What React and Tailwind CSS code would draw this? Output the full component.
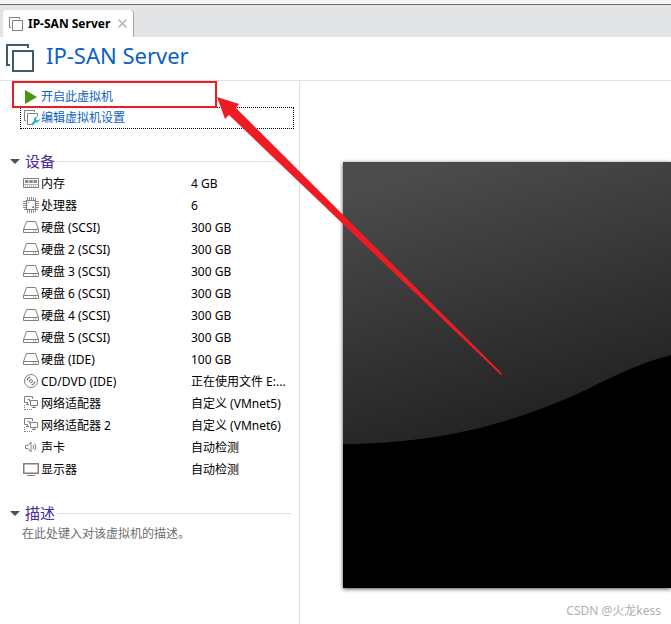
import React from "react";

const FONT =
  "font-['Noto_Sans','Noto_Sans_CJK_SC',sans-serif]";

function MachineIcon({ className }) {
  return (
    <svg className={className} viewBox="0 0 14 14" fill="none" stroke="currentColor" aria-hidden="true">
      <path d="M2 10.500H.5V.5h10V2" />
      <path d="M3.500 3.500h10v10h-10z" />
    </svg>
  );
}

function LargeMachineIcon() {
  return (
    <svg className="size-7 shrink-0 text-[#455a68]" viewBox="0 0 28 28" fill="none" stroke="currentColor" strokeWidth="2" aria-hidden="true">
      <path d="M4 21H1V1h21v3" />
      <path d="M7 7h20v20H7z" />
    </svg>
  );
}

function EditIcon() {
  return (
    <svg className="size-4 shrink-0" viewBox="0 0 16 16" fill="none" aria-hidden="true">
      <path d="M2 10.500H.5V.5h10V2M7 14.500H3.500v-11h10V6" stroke="#808080" />
      <path d="M7.500 15l4.500-4.500" stroke="#18b3cf" strokeWidth="2.200" />
      <path d="M13.800 6.800L12 8.700l.4 1.400 1.400.4L15.600 8.700a3.200 3.200 0 0 1-4.600 3.300L10 11a3.200 3.200 0 0 1 3.800-4.200z" fill="#18b3cf" />
    </svg>
  );
}

function DeviceIcon({ type }) {
  return (
    <svg className="mb-0.5 size-4 shrink-0" viewBox="0 0 16 16" fill="none" stroke="#808080" aria-hidden="true">
      {type === "memory" && (
        <>
          <path d="M.5 3.500h15v9H.5z" />
          <path d="M2 5h3.500v3H2zM6.250 5h3.500v3h-3.500zM10.500 5H14v3h-3.500z" fill="#8c8c8c" stroke="none" />
          <path d="M1 9.500h14" stroke="#b5b5b5" />
          <path d="M2 11h12" strokeDasharray="1 1" />
        </>
      )}
      {type === "cpu" && (
        <>
          <path d="M3.500 3.500h9v9h-9z" strokeWidth="1.200" />
          <path d="M4.500 0v3M6.500 0v3M8.500 0v3M10.500 0v3M12.500 1v2M4.500 13v3M6.500 13v3M8.500 13v3M10.500 13v3M12.500 13v2M0 4.500h3M0 6.500h3M0 8.500h3M0 10.500h3M1 12.500h2M13 4.500h3M13 6.500h3M13 8.500h3M13 10.500h3M13 12.500h2" strokeWidth=".9" />
          <path d="M5 5.500h1M9 10.500h2M10.500 9v1" />
        </>
      )}
      {type === "disk" && (
        <>
          <path d="M.5 10.500l3-8h9l3 8v3H.5z" />
          <path d="M.5 10.500h15M10 12h1M12 12h1" />
        </>
      )}
      {type === "cd" && (
        <>
          <circle cx="8" cy="8" r="6.500" />
          <circle cx="8" cy="8" r="1.500" />
          <path d="M4.200 7.500A3.800 3.800 0 0 1 7.500 4.200M11.800 8.500a3.800 3.800 0 0 1-3.300 3.300" strokeWidth="1.300" />
        </>
      )}
      {type === "network" && (
        <>
          <path d="M5 7.500H1.500v-6h8V4M3 9.500h3M4.500 8v1" />
          <path d="M7.500 5.500h7v5h-7zM11 11v2M9 12.500h4" />
          <path d="M4.500 4.500h2v2" />
          <path d="M1.500 10v5M2 14.500h8" strokeDasharray="1 1" />
        </>
      )}
      {type === "sound" && (
        <>
          <path d="M2.500 6.500H5l3-3.500v10L5 9.500H2.500z" />
          <path d="M10 6q1 2 0 4M11.800 4.500q2 3.500 0 7" />
        </>
      )}
      {type === "display" && (
        <>
          <path d="M.75 2.750h14.500v9.500H.75z" strokeWidth="1.500" />
          <path d="M4 14.500h8" />
        </>
      )}
    </svg>
  );
}

const devices = [
  ["memory", "内存", "4 GB"],
  ["cpu", "处理器", "6"],
  ["disk", "硬盘 (SCSI)", "300 GB"],
  ["disk", "硬盘 2 (SCSI)", "300 GB"],
  ["disk", "硬盘 3 (SCSI)", "300 GB"],
  ["disk", "硬盘 6 (SCSI)", "300 GB"],
  ["disk", "硬盘 4 (SCSI)", "300 GB"],
  ["disk", "硬盘 5 (SCSI)", "300 GB"],
  ["disk", "硬盘 (IDE)", "100 GB"],
  ["cd", "CD/DVD (IDE)", "正在使用文件 E:..."],
  ["network", "网络适配器", "自定义 (VMnet5)"],
  ["network", "网络适配器 2", "自定义 (VMnet6)"],
  ["sound", "声卡", "自动检测"],
  ["display", "显示器", "自动检测"],
];

function SectionHeading({ children }) {
  return (
    <h2 className="flex h-5 items-center pr-2 pl-[10px] text-[15px] leading-5 text-[#4a2a9e]">
      <button type="button" className="flex items-center gap-[5px]">
        <svg className="h-[5px] w-[10px]" viewBox="0 0 10 5" aria-hidden="true">
          <path d="M0 0h10L5 5z" fill="#3f5663" />
        </svg>
        {children}
      </button>
      <span className="ml-0.5 h-px flex-1 bg-[#e0e0e0]" />
    </h2>
  );
}

function ScreenPreview() {
  return (
    <div className="h-[426px] overflow-hidden bg-black shadow-[0_1px_4px_rgba(0,0,0,0.7)]">
      <svg className="h-full w-[568px] max-w-none" viewBox="0 0 568 426" aria-hidden="true">
        <defs>
          <linearGradient id="glass" gradientUnits="userSpaceOnUse" x1="50" y1="20" x2="125" y2="270">
            <stop offset="0" stopColor="#4b4b4b" />
            <stop offset="1" stopColor="#242424" />
          </linearGradient>
        </defs>
        <path d="M0 0h568v170C450 170 370 178 328 193C290 203 264 218 232 233C150 269 80 281 0 282z" fill="url(#glass)" />
      </svg>
    </div>
  );
}

export default function App() {
  return (
    <div className={`relative flex min-h-screen flex-col overflow-hidden bg-white text-[12px] text-black ${FONT}`}>
      <div className="h-1 bg-[#f4f4f4]" />
      <nav className="flex h-[33px] items-end border-t border-[#6b6b6b] bg-[#e3e4e6] pl-[3px]">
        <div className="flex h-[27px] w-[131px] items-center rounded-t-sm border-r border-[#a8a8a8] bg-white pl-1.5">
          <MachineIcon className="size-[14px] shrink-0 text-[#808080]" />
          <span className="ml-[5px] flex-1 text-[12px] font-bold whitespace-nowrap">IP-SAN Server</span>
          <button type="button" aria-label="关闭" className="mr-1.5">
            <svg className="size-[9px]" viewBox="0 0 9 9" stroke="#bdbdbd" strokeWidth="1.800" aria-hidden="true">
              <path d="M.5.500l8 8M8.500.500l-8 8" />
            </svg>
          </button>
        </div>
      </nav>
      <header className="flex h-11 items-center gap-3 border-b border-[#e0e0e0] pb-px pl-1.5">
        <LargeMachineIcon />
        <h1 className="pb-1.5 text-[22px] leading-8 text-[#0a5fc4]">IP-SAN Server</h1>
      </header>
      <main className="flex flex-1">
        <section className="w-[300px] shrink-0 border-r border-[#e0e0e0]">
          <div className="relative pt-[5px] pr-[5px] pl-5 text-[#0a5fc4]">
            <button type="button" className="flex h-[21px] w-full items-center gap-1 pl-[5px]">
              <svg className="h-[14px] w-3 shrink-0" viewBox="0 0 12 14" aria-hidden="true">
                <path d="M0 0l12 7L0 14z" fill="#46960f" />
              </svg>
              开启此虚拟机
            </button>
            <button type="button" className="flex h-[22px] w-full items-center gap-px border border-dotted border-black pl-[3px]">
              <EditIcon />
              编辑虚拟机设置
            </button>
            <div className="pointer-events-none absolute top-0 left-3 h-[27px] w-[205px] border-2 border-[#ed1c24]" />
          </div>
          <div className="pt-[22px]">
            <SectionHeading>设备</SectionHeading>
            <table className="mt-0.5 w-full table-fixed border-collapse">
              <tbody>
                {devices.map(([type, name, value]) => (
                  <tr key={name} className="h-[22px]">
                    <td className="w-[191px] p-0 pl-[23px]">
                      <div className="flex items-center gap-0.5 leading-[22px]">
                        <DeviceIcon type={type} />
                        {name}
                      </div>
                    </td>
                    <td className="p-0 leading-[22px] whitespace-nowrap">{value}</td>
                  </tr>
                ))}
              </tbody>
            </table>
          </div>
          <div className="pt-[22px]">
            <SectionHeading>描述</SectionHeading>
            <p className="pl-[22px] leading-[22px] text-[#6d6d6d]">在此处键入对该虚拟机的描述。</p>
          </div>
        </section>
        <section className="flex min-w-0 flex-1 flex-col pt-[81px] pl-[43px]">
          <ScreenPreview />
          <p className="mt-3 pr-[10px] text-right leading-[22px] text-[#b0b0b0]">CSDN @火龙kess</p>
        </section>
      </main>
      <svg className="pointer-events-none absolute top-[97px] left-[217px] h-[279px] w-[286px]" viewBox="0 0 286 279" fill="#ed1c24" aria-hidden="true">
        <path d="M0 0L22 7L19 11L285 276.500L284 278L12 18L8 22z" />
      </svg>
    </div>
  );
}
